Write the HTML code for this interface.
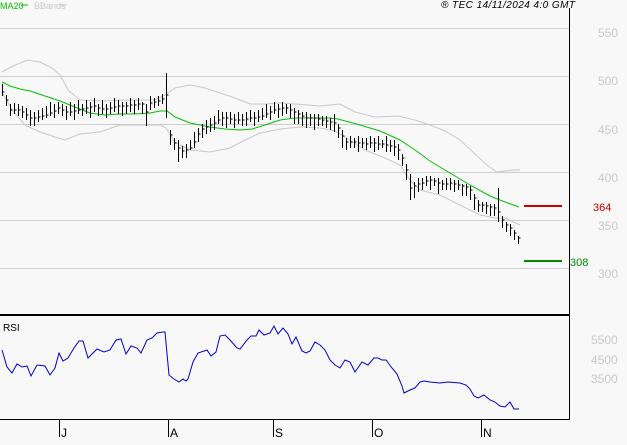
<!DOCTYPE html>
<html><head><meta charset="utf-8"><style>
html,body{margin:0;padding:0;background:#f8f8f8;}
body{width:627px;height:440px;overflow:hidden;font-family:"Liberation Sans",sans-serif;}
svg text{font-family:"Liberation Sans",sans-serif;}
</style></head><body>
<svg width="627" height="440" xmlns="http://www.w3.org/2000/svg">
<rect width="627" height="440" fill="#f8f8f8"/>
<g stroke="#cccccc" stroke-width="1">
<line x1="0" y1="28.5" x2="569" y2="28.5"/>
<line x1="0" y1="76.5" x2="569" y2="76.5"/>
<line x1="0" y1="124.5" x2="569" y2="124.5"/>
<line x1="0" y1="172.5" x2="569" y2="172.5"/>
<line x1="0" y1="220.5" x2="569" y2="220.5"/>
<line x1="0" y1="268.5" x2="569" y2="268.5"/>
</g>
<g fill="#c8c8c8" font-size="12">
<text x="598" y="37">550</text><text x="598" y="85">500</text><text x="598" y="134">450</text>
<text x="598" y="182">400</text><text x="598" y="230">350</text><text x="598" y="278">300</text>
<text x="591" y="344">5500</text><text x="591" y="364">4500</text><text x="591" y="383">3500</text>
</g>
<line x1="569.5" y1="8" x2="569.5" y2="420" stroke="#000"/>
<line x1="0" y1="315" x2="570" y2="315" stroke="#000" stroke-width="2"/>
<line x1="0" y1="419.5" x2="570" y2="419.5" stroke="#000"/>
<g stroke="#000"><line x1="59.5" y1="419" x2="59.5" y2="437"/><line x1="168.5" y1="419" x2="168.5" y2="437"/><line x1="273.5" y1="419" x2="273.5" y2="437"/><line x1="372.5" y1="419" x2="372.5" y2="437"/><line x1="481.5" y1="419" x2="481.5" y2="437"/></g>
<g font-size="12" fill="#000"><text x="61" y="437">J</text><text x="170" y="437">A</text><text x="275" y="437">S</text><text x="374" y="437">O</text><text x="483" y="437">N</text></g>
<text x="0" y="9" font-size="9" fill="#00c000">MA20</text><line x1="21" y1="5" x2="28" y2="5" stroke="#00c000"/>
<text x="34" y="9" font-size="9" fill="#c8c8c8">BBands</text><line x1="60" y1="5" x2="67" y2="5" stroke="#c8c8c8"/>
<text x="441" y="8" font-size="10" font-style="italic" fill="#000" textLength="134">® TEC 14/11/2024 4:0 GMT</text>
<text x="3" y="331" font-size="10" fill="#000">RSI</text>
<polyline fill="none" stroke="#c8c8c8" points="2,72 15,65 28,60 40,62 52,68 60,75 68,90 80,100 100,101 125,100 140,100 155,100 165,95 175,88 190,85 205,88 220,93 235,98 250,104 265,104 280,103 295,104 320,106 340,104 355,112 375,117 398,116 415,120 430,125 445,131 460,140 475,154 488,166 497,172 505,171 515,170 520,170"/>
<polyline fill="none" stroke="#c8c8c8" points="2,92 12,110 25,125 40,132 55,137 65,140 80,134 100,132 120,125 140,125 160,125 166,128 175,142 190,150 210,152 230,148 245,140 260,133 280,129 300,127 320,128 335,131 350,140 365,150 385,158 400,165 410,180 420,190 440,195 460,205 480,215 495,218 505,218 520,225"/>
<polyline fill="none" stroke="#00c000" stroke-width="1" points="2,82 10,86 20,89 30,91 45,96 60,101 75,107 90,113 105,115 120,114 135,114 150,113 160,111 167,111 175,117 190,123 210,127 225,129 240,130 252,129 265,125 280,120 295,118 315,118 330,118 338,119 360,125 380,131 400,140 415,150 430,161 450,173 470,185 490,196 505,202 519,207"/>
<path fill="none" stroke="#000" stroke-width="1" d="
M2.5 84V96M2.5 92h2 M6.5 95V106M6.5 100h2 M10.5 104V116M10.5 110h2 M14.5 103V114M14.5 110h2 M18.5 104V116M18.5 110h2
M22.5 106V118M22.5 112h2 M26.5 108V120M26.5 115h2 M30.5 110V126M30.5 118h2 M34.5 112V126M34.5 118h2 M38.5 110V122M38.5 117h2
M42.5 108V120M42.5 116h2 M46.5 106V118M46.5 115h2 M50.5 102V116M50.5 113h2 M54.5 104V118M54.5 111h2 M58.5 102V114M58.5 108h2
M62.5 104V116M62.5 110h2 M66.5 106V120M66.5 112h2 M70.5 102V116M70.5 112h2 M74.5 104V120M74.5 111h2 M78.5 100V114M78.5 110h2
M82.5 104V116M82.5 109h2 M86.5 100V114M86.5 108h2 M90.5 102V118M90.5 107h2 M94.5 98V112M94.5 106h2 M98.5 104V116M98.5 108h2
M102.5 100V114M102.5 109h2 M106.5 104V118M106.5 109h2 M110.5 102V114M110.5 108h2 M114.5 98V112M114.5 107h2 M118.5 100V114M118.5 106h2
M122.5 102V116M122.5 106h2 M126.5 102V114M126.5 106h2 M130.5 98V112M130.5 105h2 M134.5 100V114M134.5 105h2 M138.5 98V110M138.5 104h2
M142.5 102V114M142.5 104h2 M146.5 104V126M146.5 112h2 M150.5 96V110M150.5 103h2 M154.5 98V108M154.5 102h2 M158.5 96V106M158.5 101h2
M162.5 94V104M162.5 99h2 M166.5 73V118M166.5 95h2 M170.5 130V145M170.5 135h2 M174.5 138V150M174.5 143h2 M178.5 140V162M178.5 148h2
M182.5 146V158M182.5 151h2 M186.5 144V158M186.5 150h2 M190.5 140V150M190.5 148h2 M194.5 132V148M194.5 142h2 M198.5 128V142M198.5 134h2
M202.5 124V138M202.5 129h2 M206.5 120V134M206.5 127h2 M210.5 118V132M210.5 125h2 M214.5 116V130M214.5 123h2 M218.5 110V124M218.5 120h2
M222.5 112V126M222.5 118h2 M226.5 112V128M226.5 118h2 M230.5 112V124M230.5 119h2 M234.5 114V128M234.5 120h2 M238.5 112V124M238.5 120h2
M242.5 114V126M242.5 120h2 M246.5 112V126M246.5 119h2 M250.5 110V122M250.5 118h2 M254.5 112V126M254.5 118h2 M258.5 110V122M258.5 117h2
M262.5 108V120M262.5 116h2 M266.5 104V118M266.5 114h2 M270.5 106V120M270.5 112h2 M274.5 102V114M274.5 110h2 M278.5 104V118M278.5 109h2
M282.5 102V116M282.5 108h2 M286.5 104V114M286.5 108h2 M290.5 104V118M290.5 110h2 M294.5 108V124M294.5 112h2 M298.5 110V124M298.5 114h2
M302.5 112V126M302.5 116h2 M306.5 112V128M306.5 118h2 M310.5 114V126M310.5 118h2 M314.5 114V130M314.5 118h2 M318.5 114V126M318.5 119h2
M322.5 116V126M322.5 120h2 M326.5 116V128M326.5 121h2 M330.5 118V130M330.5 122h2 M334.5 114V132M334.5 123h2 M338.5 124V138M338.5 128h2
M342.5 130V148M342.5 136h2 M346.5 138V150M346.5 142h2 M350.5 136V148M350.5 142h2 M354.5 138V148M354.5 142h2 M358.5 136V152M358.5 143h2
M362.5 138V148M362.5 143h2 M366.5 138V150M366.5 144h2 M370.5 136V148M370.5 143h2 M374.5 138V152M374.5 143h2 M378.5 136V150M378.5 144h2
M382.5 140V148M382.5 144h2 M386.5 136V152M386.5 145h2 M390.5 140V152M390.5 146h2 M394.5 140V156M394.5 147h2 M398.5 144V160M398.5 150h2
M402.5 154V166M402.5 158h2 M406.5 164V180M406.5 170h2 M410.5 174V200M410.5 188h2 M414.5 182V198M414.5 186h2 M418.5 178V192M418.5 184h2
M422.5 178V190M422.5 183h2 M426.5 176V186M426.5 181h2 M430.5 176V190M430.5 180h2 M434.5 178V186M434.5 181h2 M438.5 178V194M438.5 183h2
M442.5 180V190M442.5 184h2 M446.5 178V190M446.5 184h2 M450.5 178V190M450.5 183h2 M454.5 180V192M454.5 184h2 M458.5 180V190M458.5 185h2
M462.5 184V196M462.5 186h2 M466.5 184V196M466.5 187h2 M470.5 186V200M470.5 190h2 M474.5 194V210M474.5 198h2 M478.5 200V212M478.5 205h2
M482.5 202V212M482.5 205h2 M486.5 202V214M486.5 206h2 M490.5 204V216M490.5 207h2 M494.5 204V216M494.5 208h2 M498.5 188V222M498.5 212h2
M502.5 216V228M502.5 220h2 M506.5 222V232M506.5 225h2 M510.5 224V236M510.5 228h2 M514.5 230V240M514.5 233h2 M518.5 236V244M518.5 238h2"/>
<line x1="524" y1="206" x2="562" y2="206" stroke="#cc0000" stroke-width="2"/>
<text x="593" y="211" font-size="11" fill="#cc0000">364</text>
<line x1="524" y1="261" x2="562" y2="261" stroke="#008800" stroke-width="2"/>
<text x="570" y="266" font-size="11" fill="#008800">308</text>
<polyline fill="none" stroke="#0000cc" stroke-width="1" points="2,350 7,367 12,373 17,364 22,367 27,366 31,376 37,365 45,366 50,375 55,368 59,353 63,361 68,358 74,348 79,341 83,341 88,358 97,349 104,352 110,350 116,340 121,339 126,354 131,346 137,348 141,353 147,340 152,338 157,333 163,332 165,332 169,375 174,379 179,382 183,379 186,381 188,379 193,362 198,353 207,350 211,356 216,352 220,336 225,335 230,340 237,348 240,349 247,340 251,336 256,336 259,330 264,335 270,333 274,326 278,334 283,328 288,334 292,344 296,337 302,351 306,353 310,351 315,342 320,345 325,350 330,360 335,365 340,368 345,360 350,362 355,372 362,362 368,365 374,358 378,358 382,360 386,360 392,368 397,374 402,386 404,393 410,390 415,388 420,382 424,381 430,382 440,383 448,382 460,383 466,385 470,389 474,396 478,398 484,395 490,400 495,402 500,406 505,407 510,402 514,409 519,409"/>
</svg>
</body></html>
